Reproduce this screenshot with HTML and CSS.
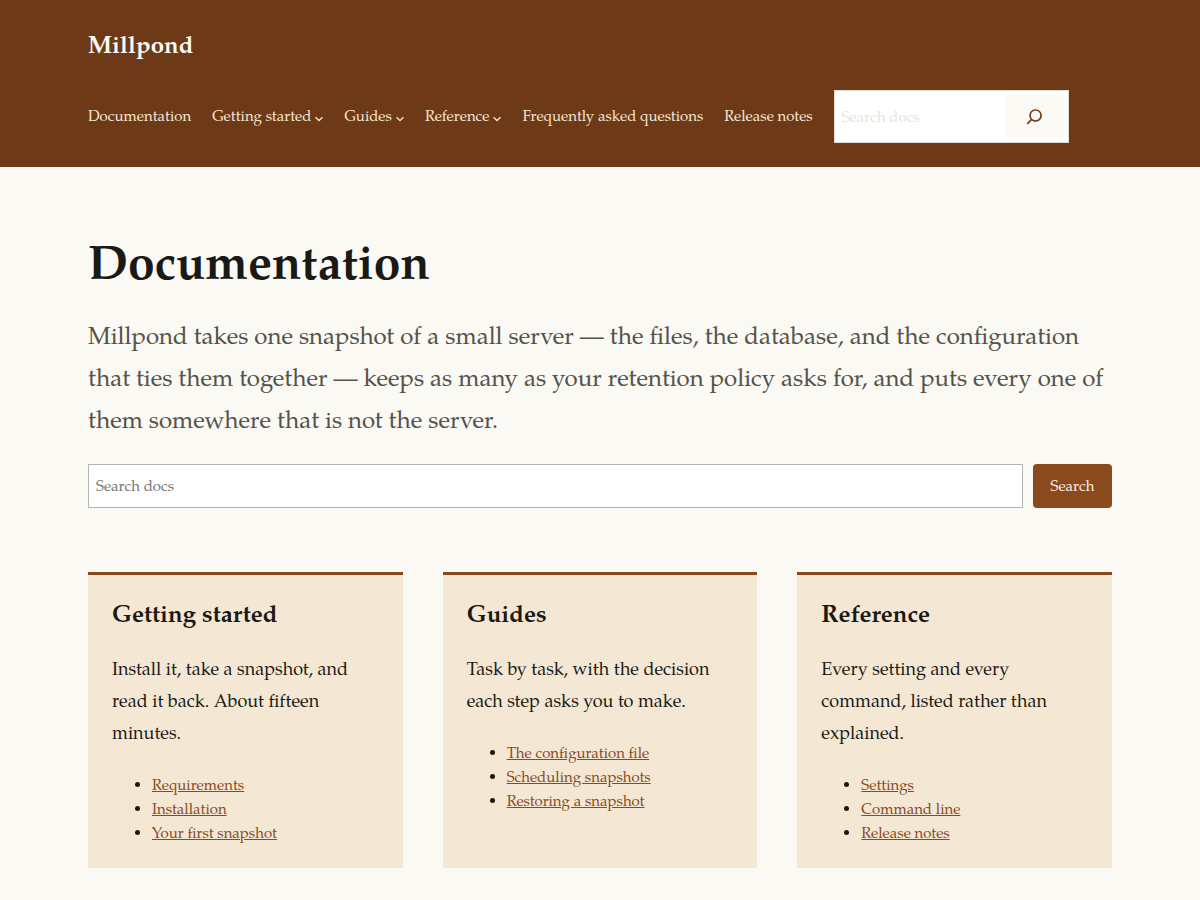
FILE: index.html
```html
<!DOCTYPE html>
<html lang="en">
<head>
<meta charset="utf-8">
<meta name="viewport" content="width=device-width, initial-scale=1">
<title>Documentation – Millpond</title>
<link rel="stylesheet" href="styles.css">
</head>
<body>
<header class="site-header">
  <div class="wrap">
    <p class="site-title"><a href="#">Millpond</a></p>
    <div class="header-row">
      <nav class="site-nav" aria-label="Main">
        <a href="#">Documentation</a>
        <a href="#">Getting started<svg class="chevron" viewBox="0 0 12 12" aria-hidden="true"><path d="M.8 3.500 6 8.300l5.200-4.800"/></svg></a>
        <a href="#">Guides<svg class="chevron" viewBox="0 0 12 12" aria-hidden="true"><path d="M.8 3.500 6 8.300l5.200-4.800"/></svg></a>
        <a href="#">Reference<svg class="chevron" viewBox="0 0 12 12" aria-hidden="true"><path d="M.8 3.500 6 8.300l5.200-4.800"/></svg></a>
        <a href="#">Frequently asked questions</a>
        <a href="#">Release notes</a>
      </nav>
      <form class="header-search" role="search">
        <input type="search" placeholder="Search docs" aria-label="Search docs">
        <button type="button" aria-label="Search"><svg viewBox="0 0 24 24" aria-hidden="true"><path d="M13 5c-3.3 0-6 2.7-6 6 0 1.4.5 2.7 1.3 3.7l-3.8 3.8 1.1 1.1 3.8-3.8c1 .8 2.3 1.3 3.7 1.3 3.3 0 6-2.7 6-6S16.300 5 13 5zm0 10.500c-2.500 0-4.500-2-4.500-4.500s2-4.500 4.500-4.500 4.500 2 4.500 4.500-2 4.500-4.500 4.500z"/></svg></button>
      </form>
    </div>
  </div>
</header>
<main class="wrap content">
  <h1>Documentation</h1>
  <p class="intro">Millpond takes one snapshot of a small server — the files, the database, and the configuration that ties them together — keeps as many as your retention policy asks for, and puts every one of them somewhere that is not the server.</p>
  <form class="page-search" role="search">
    <input type="search" placeholder="Search docs" aria-label="Search docs">
    <button type="button">Search</button>
  </form>
  <div class="cards">
    <section class="card">
      <h2>Getting started</h2>
      <p>Install it, take a snapshot, and read it back. About fifteen minutes.</p>
      <ul>
        <li><a href="#">Requirements</a></li>
        <li><a href="#">Installation</a></li>
        <li><a href="#">Your first snapshot</a></li>
      </ul>
    </section>
    <section class="card">
      <h2>Guides</h2>
      <p>Task by task, with the decision each step asks you to make.</p>
      <ul>
        <li><a href="#">The configuration file</a></li>
        <li><a href="#">Scheduling snapshots</a></li>
        <li><a href="#">Restoring a snapshot</a></li>
      </ul>
    </section>
    <section class="card">
      <h2>Reference</h2>
      <p>Every setting and every command, listed rather than explained.</p>
      <ul>
        <li><a href="#">Settings</a></li>
        <li><a href="#">Command line</a></li>
        <li><a href="#">Release notes</a></li>
      </ul>
    </section>
  </div>
</main>
</body>
</html>
```
FILE: styles.css
```css
* { box-sizing: border-box; }

body {
  margin: 0;
  background: #faf9f4;
  color: #1a1914;
  font-family: "TeX Gyre Pagella", Palatino, "Palatino Linotype", P052, "Liberation Serif", serif;
  font-size: 18px;
  line-height: 32px;
}

h1, h2, p, ul { margin: 0; }

.wrap {
  max-width: 1072px;
  margin: 0 auto;
  padding: 0 24px;
}

.site-header {
  background: #6e3917;
  padding: 24px 0;
}

.site-title {
  font-size: 24px;
  font-weight: 700;
  line-height: 48px;
  margin-bottom: 18px;
}

.site-title a { color: #fbfaf5; text-decoration: none; }

.header-row {
  display: flex;
  align-items: center;
  flex-wrap: wrap;
  gap: 21px;
}

.site-nav {
  display: flex;
  flex-wrap: wrap;
  gap: 21px;
  padding-top: 2px;
  font-size: 15px;
  line-height: 25px;
}

.site-nav a {
  display: flex;
  align-items: center;
  color: #f4e7d4;
  text-decoration: none;
}

.chevron {
  width: 8px;
  height: 8px;
  margin: 2px 0 0 4px;
  fill: none;
  stroke: currentColor;
  stroke-width: 2;
}

.header-search {
  display: flex;
  width: 235px;
  padding: 4px;
  background: #fff;
  border: 1px solid #e2dcd2;
}

.header-search input,
.page-search input {
  flex: 1;
  min-width: 0;
  font: inherit;
  font-size: 15px;
  line-height: 25px;
  background: #fff;
}

.header-search input { border: 0; padding: 3px 3px 0; }
.header-search input::placeholder { color: #ece3d6; }

.header-search button {
  display: flex;
  align-items: center;
  justify-content: center;
  width: 59px;
  height: 43px;
  padding: 0;
  border: 0;
  border-radius: 4px;
  background: #faf9f4;
}

.header-search svg {
  width: 25px;
  height: 25px;
  fill: #6e3917;
}

.content { padding-top: 64px; padding-bottom: 32px; }

h1 {
  font-size: 48px;
  line-height: 74px;
  margin-bottom: 13px;
}

.intro {
  color: #55524a;
  font-size: 24px;
  line-height: 42px;
  margin-bottom: 20px;
}

.page-search { display: flex; gap: 10px; margin-bottom: 64px; }

.page-search input {
  height: 44px;
  border: 1px solid #b4b4b0;
  padding: 3px 7px 0;
}

.page-search input::placeholder { color: #757575; }

.page-search button {
  height: 44px;
  width: 79px;
  padding: 4px 0 0;
  border: 0;
  border-radius: 4px;
  background: #8b4a1e;
  color: #fbf0e2;
  font: inherit;
  font-size: 15px;
}

.cards {
  display: grid;
  grid-template-columns: repeat(3, 1fr);
  gap: 40px;
}

.card {
  background: #f4e7d4;
  border-top: 3px solid #8b4a1e;
  padding: 24px 24px 22px;
}

.card h2 { font-size: 24px; line-height: 36px; margin-bottom: 20px; }
.card p { margin-bottom: 23px; }

.card ul {
  padding-left: 40px;
  font-size: 15px;
  line-height: 23px;
}

.card li::marker { font-size: 20px; }

.card a { color: #8b4a1e; }
```
